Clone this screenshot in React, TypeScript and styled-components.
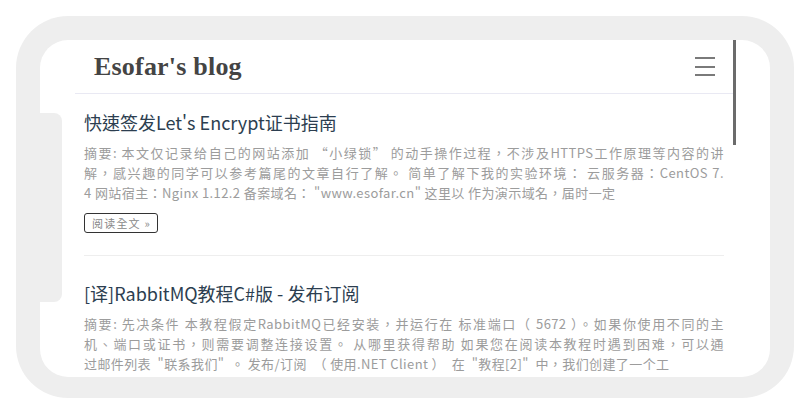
import React from "react";
import styled, { createGlobalStyle } from "styled-components";

const Global = createGlobalStyle`
  html, body { margin: 0; padding: 0; background: #ffffff; }
  * { box-sizing: border-box; }
`;

const Stage = styled.div`
  width: 812px;
  height: 414px;
  padding: 16px 18px 16px 16px;
  background: #ffffff;
`;

const Frame = styled.div`
  width: 778px;
  height: 382px;
  background: #eeeeee;
  border-radius: 52px;
  padding: 24px 24px 21px 24px;
`;

const Screen = styled.div`
  position: relative;
  height: 100%;
  background: #ffffff;
  border-radius: 28px;
  overflow: hidden;
  font-family: "Noto Sans CJK TC", "Noto Sans", sans-serif;
`;

const Notch = styled.div`
  position: absolute;
  left: 0;
  top: 73px;
  width: 22px;
  height: 189px;
  background: #eeeeee;
  border-radius: 0 8px 8px 0;
  z-index: 2;
`;

const ScrollThumb = styled.div`
  position: absolute;
  right: 34px;
  top: 0;
  width: 3px;
  height: 105px;
  background: #6b6b6b;
  z-index: 2;
`;

const Header = styled.header`
  height: 54px;
  margin: 0 37px 0 35px;
  padding: 0 18px 0 19px;
  display: flex;
  align-items: center;
  justify-content: space-between;
  border-bottom: 1px solid #e9e9f3;
`;

const Brand = styled.h1`
  margin: 0;
  font-family: "Liberation Serif", "Times New Roman", serif;
  font-weight: 700;
  font-size: 26px;
  color: #444444;
  letter-spacing: 0.2px;
`;

const MenuButton = styled.div`
  width: 20px;
  display: flex;
  flex-direction: column;
  gap: 6.5px;
`;

const MenuBar = styled.span`
  display: block;
  height: 2px;
  background: #7a7a7a;
`;

const List = styled.main`
  margin: 0 46px 0 44px;
`;

const Article = styled.article<{ $top: number }>`
  padding: ${(p) => p.$top}px 0 22px;
  border-bottom: 1px solid #eeeeee;
`;

const Title = styled.h2`
  margin: 0 0 7px;
  font-size: 18px;
  line-height: 27px;
  font-weight: 400;
  color: #2c3e50;
`;

const Excerpt = styled.div`
  font-size: 13px;
  line-height: 20px;
  color: #9c9c9c;
  letter-spacing: 0.4px;
`;

const Line = styled.div<{ $fill?: boolean }>`
  white-space: pre;
  text-align: ${(p) => (p.$fill ? "justify" : "left")};
  text-align-last: ${(p) => (p.$fill ? "justify" : "left")};
`;

const ReadMore = styled.a`
  display: inline-flex;
  align-items: center;
  height: 20px;
  margin-top: 10px;
  padding: 0 6px 0 7px;
  border: 1px solid #333333;
  border-radius: 3px;
  font-size: 11px;
  letter-spacing: 1.2px;
  color: #888888;
  text-decoration: none;
`;

type Post = { title: string; lines: string[]; more: boolean; top: number };

const posts: Post[] = [
  {
    title: "快速签发Let's Encrypt证书指南",
    lines: [
      "摘要: 本文仅记录给自己的网站添加 “小绿锁” 的动手操作过程，不涉及HTTPS工作原理等内容的讲",
      "解，感兴趣的同学可以参考篇尾的文章自行了解。 简单了解下我的实验环境： 云服务器：CentOS 7.",
      "4 网站宿主：Nginx 1.12.2 备案域名： \"www.esofar.cn\" 这里以 作为演示域名，届时一定",
    ],
    more: true,
    top: 15,
  },
  {
    title: "[译]RabbitMQ教程C#版 - 发布订阅",
    lines: [
      "摘要: 先决条件 本教程假定RabbitMQ已经安装，并运行在 标准端口（ 5672 ）。如果你使用不同的主",
      "机、端口或证书，则需要调整连接设置。 从哪里获得帮助 如果您在阅读本教程时遇到困难，可以通",
      "过邮件列表  \"联系我们\"  。 发布/订阅  （ 使用.NET Client ）  在  \"教程[2]\"  中，我们创建了一个工",
    ],
    more: true,
    top: 24,
  },
];

export default function App() {
  return (
    <Stage>
      <Global />
      <Frame>
        <Screen lang="zh-Hant">
          <Notch />
          <ScrollThumb />
          <Header>
            <Brand lang="en">Esofar's blog</Brand>
            <MenuButton>
              <MenuBar />
              <MenuBar />
              <MenuBar />
            </MenuButton>
          </Header>
          <List>
            {posts.map((p) => (
              <Article key={p.title} $top={p.top}>
                <Title>{p.title}</Title>
                <Excerpt>
                  {p.lines.map((l, i) => (
                    <Line key={i} $fill={i < p.lines.length - 1}>
                      {l}
                    </Line>
                  ))}
                </Excerpt>
                {p.more && <ReadMore href="#">阅读全文 »</ReadMore>}
              </Article>
            ))}
          </List>
        </Screen>
      </Frame>
    </Stage>
  );
}
